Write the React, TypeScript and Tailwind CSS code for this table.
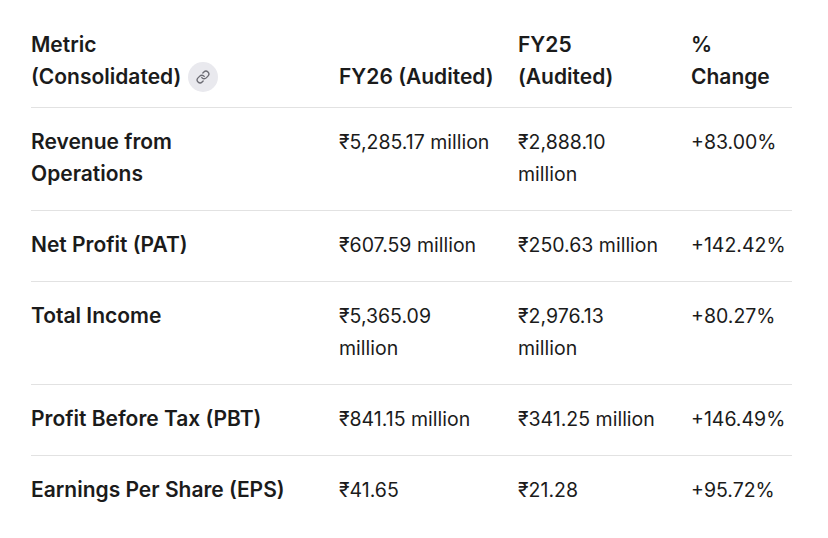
import React from "react";

const rows = [
  ["Revenue from Operations", "₹5,285.17 million", "₹2,888.10 million", "+83.00%"],
  ["Net Profit (PAT)", "₹607.59 million", "₹250.63 million", "+142.42%"],
  ["Total Income", "₹5,365.09 million", "₹2,976.13 million", "+80.27%"],
  ["Profit Before Tax (PBT)", "₹841.15 million", "₹341.25 million", "+146.49%"],
  ["Earnings Per Share (EPS)", "₹41.65", "₹21.28", "+95.72%"],
];

function LinkIcon() {
  return (
    <svg width="14" height="14" viewBox="0 0 24 24" fill="none" stroke="#6b6b73" strokeWidth="2.3" strokeLinecap="round" strokeLinejoin="round">
      <path d="M10 13a5 5 0 0 0 7.54.54l3-3a5 5 0 0 0-7.07-7.07l-1.72 1.71" />
      <path d="M14 11a5 5 0 0 0-7.54-.54l-3 3a5 5 0 0 0 7.07 7.07l1.71-1.71" />
    </svg>
  );
}

export default function App() {
  return (
    <div
      className="w-[828px] h-[538px] bg-white text-[#1b1b1b] overflow-hidden"
      style={{ fontFamily: "Inter, 'Noto Sans', sans-serif" }}
    >
      <div className="pl-[31px] pr-[36px]">
        <table className="table-fixed border-collapse w-[761px] text-[19.5px] leading-[32px]">
          <colgroup>
            <col className="w-[308px]" />
            <col className="w-[179px]" />
            <col className="w-[173px]" />
            <col className="w-[101px]" />
          </colgroup>
          <thead>
            <tr className="border-b border-[#e2e2e2]">
              <th className="text-left align-bottom font-semibold text-[21px] pt-[29px] pb-[14px] pr-[52px]">
                <div>Metric</div>
                <div className="flex items-center">
                  <span>(Consolidated)</span>
                  <span className="ml-[7px] inline-flex items-center justify-center w-[30px] h-[30px] rounded-full bg-[#e9e9ee]">
                    <LinkIcon />
                  </span>
                </div>
              </th>
              <th className="text-left align-bottom font-semibold text-[21px] pt-[29px] pb-[14px] pr-[26px] whitespace-nowrap">FY26 (Audited)</th>
              <th className="text-left align-bottom font-semibold text-[21px] pt-[29px] pb-[14px] pr-[28px]">FY25 (Audited)</th>
              <th className="text-left align-bottom font-semibold text-[21px] pt-[29px] pb-[14px] pr-[30px]">% Change</th>
            </tr>
          </thead>
          <tbody>
            {rows.map((r, i) => (
              <tr key={i} className={i < rows.length - 1 ? "border-b border-[#e2e2e2]" : ""}>
                <td className="align-top font-semibold text-[21px] pt-[18px] pb-[20px] pr-[52px]">{r[0]}</td>
                <td className="align-top pt-[18px] pb-[20px] pr-[26px]">{r[1]}</td>
                <td className="align-top pt-[18px] pb-[20px] pr-[28px]">{r[2]}</td>
                <td className="align-top pt-[18px] pb-[20px] whitespace-nowrap">{r[3]}</td>
              </tr>
            ))}
          </tbody>
        </table>
      </div>
    </div>
  );
}
